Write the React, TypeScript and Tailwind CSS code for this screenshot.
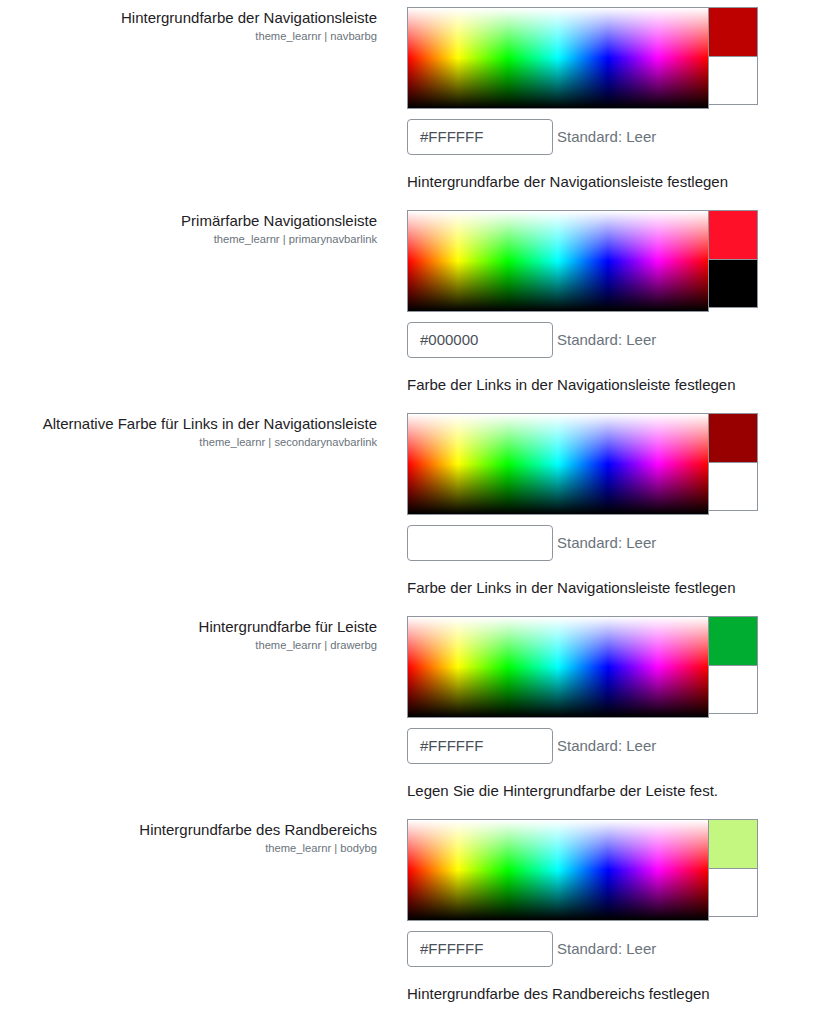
import React from "react";

type ColourSetting = {
  label: string;
  setting: string;
  swatch: string;
  current: string;
  value: string;
  description: string;
};

const settings: ColourSetting[] = [
  {
    label: "Hintergrundfarbe der Navigationsleiste",
    setting: "navbarbg",
    swatch: "bg-[#bd0000]",
    current: "bg-white",
    value: "#FFFFFF",
    description: "Hintergrundfarbe der Navigationsleiste festlegen",
  },
  {
    label: "Primärfarbe Navigationsleiste",
    setting: "primarynavbarlink",
    swatch: "bg-[#ff1029]",
    current: "bg-black",
    value: "#000000",
    description: "Farbe der Links in der Navigationsleiste festlegen",
  },
  {
    label: "Alternative Farbe für Links in der Navigationsleiste",
    setting: "secondarynavbarlink",
    swatch: "bg-[#980000]",
    current: "bg-white",
    value: "",
    description: "Farbe der Links in der Navigationsleiste festlegen",
  },
  {
    label: "Hintergrundfarbe für Leiste",
    setting: "drawerbg",
    swatch: "bg-[#00ad30]",
    current: "bg-white",
    value: "#FFFFFF",
    description: "Legen Sie die Hintergrundfarbe der Leiste fest.",
  },
  {
    label: "Hintergrundfarbe des Randbereichs",
    setting: "bodybg",
    swatch: "bg-[#c4f77f]",
    current: "bg-white",
    value: "#FFFFFF",
    description: "Hintergrundfarbe des Randbereichs festlegen",
  },
];

const HueField = () => (
  <svg width="300" height="100" className="block">
    <defs>
      <linearGradient id="hue" x1="0" y1="0" x2="1" y2="0">
        <stop offset="0" stopColor="#ff0000" />
        <stop offset="0.1667" stopColor="#ffff00" />
        <stop offset="0.3333" stopColor="#00ff00" />
        <stop offset="0.5" stopColor="#00ffff" />
        <stop offset="0.6667" stopColor="#0000ff" />
        <stop offset="0.8333" stopColor="#ff00ff" />
        <stop offset="1" stopColor="#ff0000" />
      </linearGradient>
      <linearGradient id="shade" x1="0" y1="0" x2="0" y2="1">
        <stop offset="0" stopColor="#ffffff" stopOpacity="1" />
        <stop offset="0.5" stopColor="#ffffff" stopOpacity="0" />
        <stop offset="0.5" stopColor="#000000" stopOpacity="0" />
        <stop offset="1" stopColor="#000000" stopOpacity="1" />
      </linearGradient>
    </defs>
    <rect width="300" height="100" fill="url(#hue)" />
    <rect width="300" height="100" fill="url(#shade)" />
  </svg>
);

const ColourRow = ({ item }: { item: ColourSetting }) => (
  <div className="flex h-[203px]">
    <div className="w-[377px] shrink-0 text-right">
      <div className="text-[15px] leading-[22px] text-[#1d2125]">{item.label}</div>
      <div className="text-[11.2px] leading-[14px] text-[#6a737b]">
        theme_learnr | {item.setting}
      </div>
    </div>
    <div className="ml-[30px] flex flex-col">
      <div className="flex items-start">
        <div className="border border-[#8f959e]">
          <HueField />
        </div>
        <div className="-ml-px flex flex-col">
          <div className={`h-[50px] w-[50px] border border-[#8f959e] ${item.swatch}`} />
          <div className={`-mt-px h-[49px] w-[50px] border border-[#8f959e] ${item.current}`} />
        </div>
      </div>
      <div className="mt-[10px] flex items-center">
        <div className="flex h-[36px] w-[146px] items-center rounded-[4px] border border-[#8f959e] px-[12px] text-[15px] text-[#495057]">
          {item.value}
        </div>
        <span className="ml-[4px] text-[15px] text-[#6a737b]">Standard: Leer</span>
      </div>
      <div className="mt-[16px] text-[15px] leading-[22px] text-[#1d2125]">
        {item.description}
      </div>
    </div>
  </div>
);

export default function App() {
  return (
    <div className="min-h-[1016px] bg-white pt-[7px] font-['Liberation_Sans',Arial,sans-serif]">
      {settings.map((s) => (
        <ColourRow key={s.setting} item={s} />
      ))}
    </div>
  );
}
